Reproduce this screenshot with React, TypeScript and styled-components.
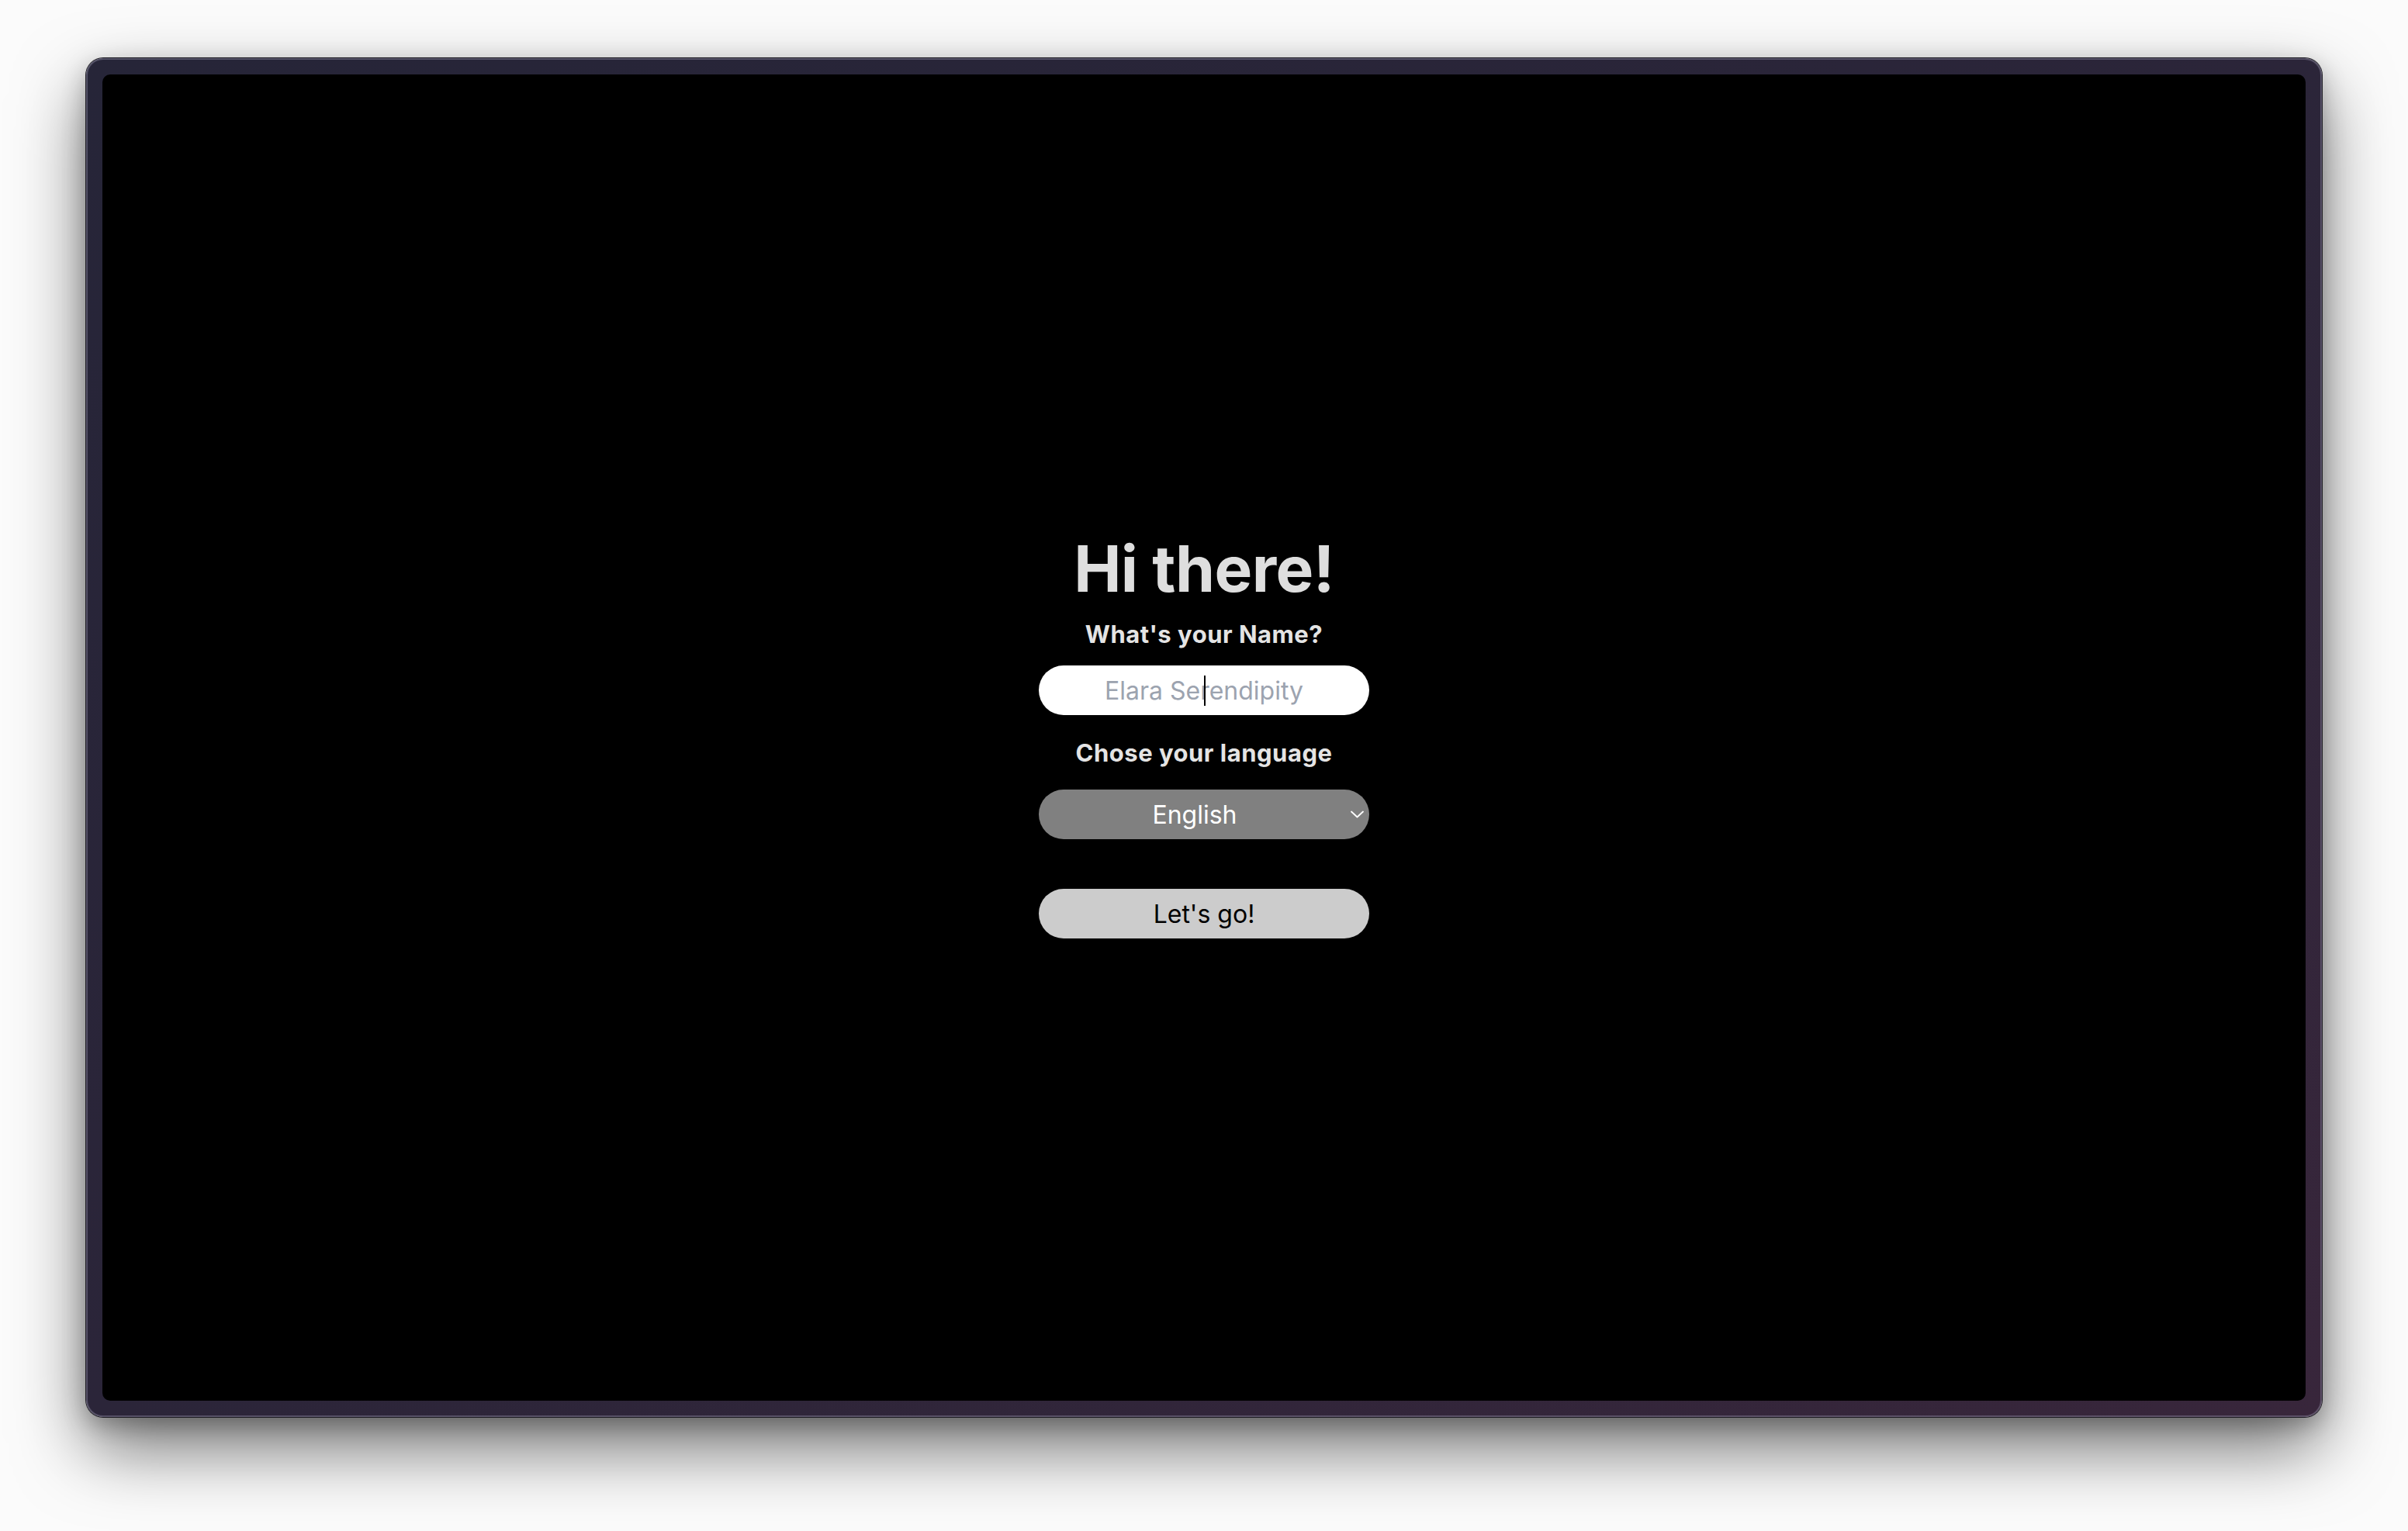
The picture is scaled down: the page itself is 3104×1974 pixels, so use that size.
import React from "react";
import styled, { createGlobalStyle } from "styled-components";

const Global = createGlobalStyle`
  html, body {
    margin: 0;
    padding: 0;
    background: #fbfbfb;
    font-family: Inter, "Noto Sans", "Liberation Sans", sans-serif;
  }
  * { box-sizing: border-box; }
`;

const Page = styled.div`
  width: 3104px;
  height: 1974px;
  padding: 75px 111px 147px 111px;
  background: #fbfbfb;
`;

const Frame = styled.div`
  width: 100%;
  height: 100%;
  border-radius: 22px;
  padding: 21px;
  background: linear-gradient(to bottom right, #262538 0%, #2b2539 50%, #38263b 100%);
  box-shadow:
    0 0 0 1px #1c1b22,
    inset 0 0 0 2px rgba(140, 135, 160, 0.45),
    0 40px 90px rgba(0, 0, 0, 0.55),
    0 10px 30px rgba(0, 0, 0, 0.25);
`;

const Screen = styled.main`
  width: 100%;
  height: 100%;
  background: #000;
  border-radius: 10px;
  display: flex;
  flex-direction: column;
  align-items: center;
  justify-content: center;
`;

const Title = styled.h1`
  margin: 0 0 24px 0;
  font-size: 82px;
  line-height: 84px;
  font-weight: 700;
  color: #dedede;
  letter-spacing: -0.6px;
`;

const Label = styled.label<{ $gap: number }>`
  display: block;
  font-size: 31px;
  line-height: 35px;
  font-weight: 700;
  letter-spacing: 0.5px;
  color: #e4e4e4;
  margin-bottom: ${(p) => p.$gap}px;
`;

const Field = styled.div<{ $gap: number }>`
  position: relative;
  width: 426px;
  height: 64px;
  margin-bottom: ${(p) => p.$gap}px;
`;

const NameInput = styled.input`
  width: 100%;
  height: 100%;
  border: none;
  outline: none;
  border-radius: 32px;
  background: #ffffff;
  text-align: center;
  font-family: inherit;
  font-size: 32px;
  color: #111;
  padding: 0 20px;
  &::placeholder {
    color: #9ca3af;
  }
`;

const Caret = styled.span`
  position: absolute;
  left: 213px;
  top: 13px;
  width: 2px;
  height: 39px;
  background: #000;
`;

const Select = styled.select`
  width: 100%;
  height: 100%;
  border: none;
  outline: none;
  border-radius: 32px;
  background: #808080;
  color: #ffffff;
  font-family: inherit;
  font-size: 32px;
  text-align: center;
  text-align-last: center;
  appearance: none;
  -webkit-appearance: none;
  padding: 0 24px 0 0;
`;

const Chevron = styled.svg`
  position: absolute;
  right: 7px;
  top: 27px;
  width: 17px;
  height: 10px;
  pointer-events: none;
`;

const GoButton = styled.button`
  width: 426px;
  height: 64px;
  border: none;
  border-radius: 32px;
  background: #cccccc;
  color: #000;
  font-family: inherit;
  font-size: 32px;
  font-weight: 400;
  cursor: pointer;
`;

export default function App() {
  return (
    <>
      <Global />
      <Page>
        <Frame>
          <Screen>
            <Title>Hi there!</Title>
            <Label $gap={23}>What's your Name?</Label>
            <Field $gap={31}>
              <NameInput placeholder="Elara Serendipity" />
              <Caret />
            </Field>
            <Label $gap={30}>Chose your language</Label>
            <Field $gap={64}>
              <Select defaultValue="en">
                <option value="en">English</option>
                <option value="fr">Français</option>
                <option value="de">Deutsch</option>
              </Select>
              <Chevron viewBox="0 0 17 10" fill="none">
                <path d="M1 1.5 L8.5 8.5 L16 1.5" stroke="#ffffff" strokeWidth="1.8" strokeLinecap="round" strokeLinejoin="round" />
              </Chevron>
            </Field>
            <GoButton>Let's go!</GoButton>
          </Screen>
        </Frame>
      </Page>
    </>
  );
}
